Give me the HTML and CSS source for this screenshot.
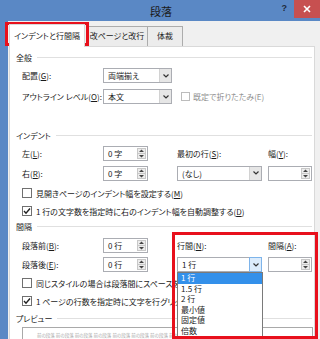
FILE: index.html
```html
<!DOCTYPE html>
<html lang="ja">
<head>
    <meta charset="UTF-8">
    <meta name="viewport" content="width=device-width, initial-scale=1.0">
    <title>段落</title>
    <link rel="stylesheet" href="styles.css">
</head>
<body>
<div class="window">
    <div class="titlebar">
        <span class="title">段落</span>
        <span class="help">?</span>
        <span class="close">
            <svg width="8" height="8" viewBox="0 0 8 8"><path d="M1 1 L7 7 M7 1 L1 7" stroke="#fff" stroke-width="1.6"/></svg>
        </span>
    </div>
    <div class="client">
        <div class="tabs">
            <div class="tab active">インデントと行間隔</div>
            <div class="tab t2">改ページと改行</div>
            <div class="tab t3">体裁</div>
        </div>
        <div class="panel">
            <div class="group-title first"><span>全般</span><i></i></div>
            <div class="row r1">
                <label>配置(<u>G</u>):</label>
                <div class="combo wide"><span class="val">両端揃え</span><span class="drop"><svg width="6" height="4" viewBox="0 0 6 4"><path d="M0.5 0.5 L3 3 L5.5 0.5" fill="none" stroke="#333" stroke-width="1.2"/></svg></span></div>
            </div>
            <div class="row">
                <label>アウトライン レベル(<u>O</u>):</label>
                <div class="combo wide"><span class="val">本文</span><span class="drop"><svg width="6" height="4" viewBox="0 0 6 4"><path d="M0.5 0.5 L3 3 L5.5 0.5" fill="none" stroke="#333" stroke-width="1.2"/></svg></span></div>
                <div class="check disabled span2"><span class="box"></span>既定で折りたたみ(E)</div>
            </div>

            <div class="group-title sec2"><span>インデント</span><i></i></div>
            <div class="row r3">
                <label>左(<u>L</u>):</label>
                <div class="spin"><span class="val">0 字</span><span class="arrows"><svg width="7" height="11" viewBox="0 0 7 11"><path d="M1 4 L3.5 1.5 L6 4 Z M1 7 L3.5 9.5 L6 7 Z" fill="#444"/><path d="M0 5.5 H7" stroke="#c8c8c8"/></svg></span></div>
                <label>最初の行(<u>S</u>):</label>
                <label>幅(<u>Y</u>):</label>
            </div>
            <div class="row">
                <label>右(<u>R</u>):</label>
                <div class="spin"><span class="val">0 字</span><span class="arrows"><svg width="7" height="11" viewBox="0 0 7 11"><path d="M1 4 L3.5 1.5 L6 4 Z M1 7 L3.5 9.5 L6 7 Z" fill="#444"/><path d="M0 5.5 H7" stroke="#c8c8c8"/></svg></span></div>
                <div class="combo mid"><span class="val">(なし)</span><span class="drop"><svg width="6" height="4" viewBox="0 0 6 4"><path d="M0.5 0.5 L3 3 L5.5 0.5" fill="none" stroke="#333" stroke-width="1.2"/></svg></span></div>
                <div class="spin narrow"><span class="val"></span><span class="arrows"><svg width="7" height="11" viewBox="0 0 7 11"><path d="M1 4 L3.5 1.5 L6 4 Z M1 7 L3.5 9.5 L6 7 Z" fill="#444"/><path d="M0 5.5 H7" stroke="#c8c8c8"/></svg></span></div>
            </div>
            <div class="check line c1"><span class="box"></span>見開きページのインデント幅を設定する(<u>M</u>)</div>
            <div class="check line"><span class="box on"><svg width="8" height="8" viewBox="0 0 8 8"><path d="M1 4 L3 6.2 L7 1.5" fill="none" stroke="#222" stroke-width="1.4"/></svg></span>1 行の文字数を指定時に右のインデント幅を自動調整する(<u>D</u>)</div>

            <div class="group-title"><span>間隔</span><i></i></div>
            <div class="row r3b">
                <label>段落前(<u>B</u>):</label>
                <div class="spin"><span class="val">0 行</span><span class="arrows"><svg width="7" height="11" viewBox="0 0 7 11"><path d="M1 4 L3.5 1.5 L6 4 Z M1 7 L3.5 9.5 L6 7 Z" fill="#444"/><path d="M0 5.5 H7" stroke="#c8c8c8"/></svg></span></div>
                <label>行間(<u>N</u>):</label>
                <label>間隔(<u>A</u>):</label>
            </div>
            <div class="row short">
                <label>段落後(<u>E</u>):</label>
                <div class="spin"><span class="val">0 行</span><span class="arrows"><svg width="7" height="11" viewBox="0 0 7 11"><path d="M1 4 L3.5 1.5 L6 4 Z M1 7 L3.5 9.5 L6 7 Z" fill="#444"/><path d="M0 5.5 H7" stroke="#c8c8c8"/></svg></span></div>
                <div class="combo mid focus"><span class="val">1 行</span><span class="drop"><svg width="6" height="4" viewBox="0 0 6 4"><path d="M0.5 0.5 L3 3 L5.5 0.5" fill="none" stroke="#333" stroke-width="1.2"/></svg></span></div>
                <div class="spin narrow"><span class="val"></span><span class="arrows"><svg width="7" height="11" viewBox="0 0 7 11"><path d="M1 4 L3.5 1.5 L6 4 Z M1 7 L3.5 9.5 L6 7 Z" fill="#444"/><path d="M0 5.5 H7" stroke="#c8c8c8"/></svg></span></div>
            </div>
            <div class="check line clip"><span class="box"></span>同じスタイルの場合は段落間にスペースを追加しない(<u>C</u>)</div>
            <div class="check line clip"><span class="box on"><svg width="8" height="8" viewBox="0 0 8 8"><path d="M1 4 L3 6.2 L7 1.5" fill="none" stroke="#222" stroke-width="1.4"/></svg></span>1 ページの行数を指定時に文字を行グリッド線に合わせる(<u>W</u>)</div>

            <div class="group-title pre"><span>プレビュー</span><i></i></div>
            <div class="preview">前の段落 前の段落 前の段落 前の段落 前の段落 前の段落 前の段落 前の段落</div>
        </div>
    </div>

    <ul class="droplist">
        <li class="sel">1 行</li>
        <li>1.5 行</li>
        <li>2 行</li>
        <li>最小値</li>
        <li>固定値</li>
        <li>倍数</li>
    </ul>

    <div class="mark mark-tab"></div>
    <div class="mark mark-spacing"></div>
</div>
</body>
</html>
```

FILE: styles.css
```css
* {
    box-sizing: border-box;
}

body {
    margin: 0;
    background: #f0f0f0;
    font-family: "Noto Sans CJK JP", "Liberation Sans", sans-serif;
    font-size: 8px;
    font-feature-settings: "palt";
    color: #1a1a1a;
    overflow: hidden;
}

.window {
    position: relative;
    width: 320px;
    height: 339px;
    background: #5a88c5;
    overflow: hidden;
}

.titlebar {
    height: 21px;
    display: flex;
    align-items: flex-start;
    color: #1a1a1a;
}

.title {
    font-size: 11px;
    margin-left: 150px;
    margin-top: 3px;
}

.help {
    margin-left: auto;
    margin-top: 3px;
    margin-right: 7px;
    font: bold 9px "Liberation Sans", sans-serif;
    color: #1e2a3a;
}

.close {
    width: 26px;
    height: 18px;
    background: #c75050;
    display: flex;
    align-items: center;
    justify-content: center;
}

.close svg {
    display: block;
}

.client {
    margin-left: 8px;
    height: 318px;
    background: #f0f0f0;
    padding-top: 3px;
}

/* tabs */
.tabs {
    display: flex;
    align-items: flex-end;
    height: 22px;
    padding-left: 1px;
}

.tab {
    height: 20px;
    line-height: 18px;
    text-align: center;
    border: 1px solid #acacac;
    border-bottom: none;
    background: #ececec;
    white-space: nowrap;
}

.tab.active {
    height: 23px;
    width: 76px;
    margin-bottom: -1px;
    line-height: 21px;
    background: #fff;
    border-color: #d9d9d9;
    position: relative;
    z-index: 1;
}

.tab.t2 {
    width: 62px;
    margin-left: 1px;
}

.tab.t3 {
    width: 36px;
    margin-left: -1px;
}

/* panel */
.panel {
    margin-left: 1px;
    width: 306px;
    height: 300px;
    background: #fff;
    border: 1px solid #d9d9d9;
    padding: 4px 2px 0 6px;
}

.group-title {
    display: flex;
    align-items: center;
    height: 12px;
    color: #1a1a1a;
}

.group-title i {
    flex: 1;
    height: 0;
    border-top: 1px solid #e0e0e0;
    margin-left: 5px;
}

.group-title.sec2 {
    margin-top: 22px;
}

.group-title.pre {
    margin-top: 2px;
}

.row {
    display: grid;
    grid-template-columns: 81px 74px 91px 1fr;
    align-items: center;
    height: 21px;
    padding-left: 6px;
    white-space: nowrap;
}

.row.r1 {
    margin-top: 2px;
}

.row.r3 {
    margin-top: 2px;
    height: 20px;
}

.row.r3 + .row {
    height: 20px;
}

.row.r3b {
    margin-top: 3px;
    height: 20px;
}

.row.short {
    height: 19px;
}

.row label {
    white-space: nowrap;
}

.span2 {
    grid-column: 3 / span 2;
    margin-left: 4px;
}

/* inputs */
.combo,
.spin {
    display: flex;
    height: 15px;
    border: 1px solid #abadb3;
    background: #fff;
}

.combo.wide {
    width: 69px;
}

.combo.mid {
    width: 85px;
}

.spin {
    width: 45px;
}

.spin.narrow {
    width: 44px;
}

.val {
    flex: 1;
    padding-left: 4px;
    line-height: 13px;
    white-space: nowrap;
    overflow: hidden;
}

.drop {
    width: 12px;
    background: #e6e6e6;
    border-left: 1px solid #d2d2d2;
    display: flex;
    align-items: center;
    justify-content: center;
}

.combo.focus .drop {
    background: #dcecfc;
    border: 1px solid #7eb4ea;
    margin: -1px -1px -1px 0;
    width: 13px;
    height: 15px;
}

.arrows {
    width: 9px;
    margin: 1px 1px 1px 0;
    background: #ececec;
    border: 1px solid #c8c8c8;
    display: flex;
    align-items: center;
    justify-content: center;
}

.arrows svg,
.drop svg {
    display: block;
}

/* checkboxes */
.check {
    display: flex;
    align-items: center;
    white-space: nowrap;
}

.check.line {
    height: 18px;
    padding-left: 6px;
}

.check.clip {
    width: 161px;
    overflow: hidden;
}

.check.c1 {
    margin-top: 1px;
}

.box {
    width: 10px;
    height: 10px;
    border: 1px solid #707070;
    background: #fff;
    margin-right: 4px;
    flex: none;
    display: flex;
    align-items: center;
    justify-content: center;
}

.box svg {
    display: block;
}

.check.disabled {
    color: #8d8d8d;
}

.check.disabled .box {
    border-color: #bcbcbc;
    width: 9px;
    height: 9px;
    margin-right: 3px;
}

/* preview */
.preview {
    margin: 3px 0 0 6px;
    width: 291px;
    height: 30px;
    border: 1px solid #a9a9a9;
    border-bottom: none;
    padding: 4px 0 0 14px;
    font-size: 4.5px;
    color: #a8a8a8;
    white-space: nowrap;
    overflow: hidden;
}

/* overlays */
.droplist {
    position: absolute;
    left: 177px;
    top: 272px;
    width: 86px;
    height: 66px;
    margin: 0;
    padding: 0;
    list-style: none;
    background: #fff;
    border: 1px solid #7a7a7a;
}

.droplist li {
    height: 10.6px;
    line-height: 10.6px;
    padding-left: 3px;
}

.droplist li.sel {
    background: #3390ea;
    color: #fff;
}

.mark {
    position: absolute;
    border: 3px solid #e8101c;
}

.mark-tab {
    left: 5px;
    top: 22px;
    width: 84px;
    height: 24px;
}

.mark-spacing {
    left: 172px;
    top: 232px;
    width: 146px;
    height: 107px;
}
```
